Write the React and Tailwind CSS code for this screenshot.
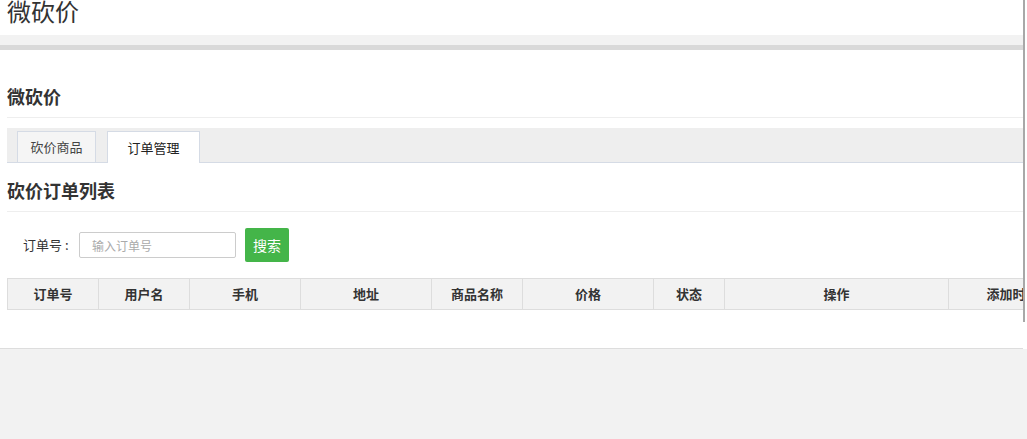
import React, { useState } from "react";

const columns = [
  { label: "订单号", width: "w-[91px]" },
  { label: "用户名", width: "w-[91px]" },
  { label: "手机", width: "w-[111px]" },
  { label: "地址", width: "w-[131px]" },
  { label: "商品名称", width: "w-[91px]" },
  { label: "价格", width: "w-[131px]" },
  { label: "状态", width: "w-[71px]" },
  { label: "操作", width: "w-[224px]" },
  { label: "添加时间", width: "w-[128px]" },
];

const tabs = ["砍价商品", "订单管理"];

const App = () => {
  const [activeTab, setActiveTab] = useState(1);
  const [orderNo, setOrderNo] = useState("");

  return (
    <div
      className="relative min-h-[439px] bg-[#f2f2f2] text-[#333]"
      style={{ fontFamily: '"Noto Sans CJK SC", "Noto Sans", sans-serif' }}
    >
      <div className="w-[1023px] overflow-hidden">
        {/* top header */}
        <div className="h-[35px] bg-white pl-[7px] overflow-hidden">
          <div className="-mt-[3px] text-[24px] leading-[28px] font-normal text-[#333]">微砍价</div>
        </div>
        <div className="h-[10px] bg-[#f2f2f2]" />
        <div className="h-[5px] bg-[#d9d9d9]" />

        {/* content panel */}
        <div className="h-[299px] bg-white pl-[7px] border-b border-[#dddddd]">
          <div className="pt-[34px] pb-[9px] border-b border-[#eeeeee]">
            <h2 className="text-[18px] leading-[24px] font-bold">微砍价</h2>
          </div>

          <div className="mt-[10px] h-[35px] bg-[#eeeeee] border-b border-[#d5dbe5] flex items-end gap-[11px] pl-[10px]">
            {tabs.map((tab, i) => (
              <button
                key={tab}
                onClick={() => setActiveTab(i)}
                className={
                  i === activeTab
                    ? "h-[32px] w-[93px] -mb-px bg-white border border-b-0 border-[#d5dbe5] text-[13px] text-[#222]"
                    : "h-[31px] w-[79px] bg-[#f5f5f5] border border-b-0 border-[#d5dbe5] text-[13px] text-[#444]"
                }
              >
                {tab}
              </button>
            ))}
          </div>

          <div className="mt-[15px] pb-[9px] border-b border-[#eeeeee]">
            <h3 className="text-[18px] leading-[24px] font-bold">砍价订单列表</h3>
          </div>

          <div className="mt-[16px] flex items-center h-[34px] pl-[16px]">
            <label className="text-[13px] w-[56px] flex">
              订单号<span className="ml-[3px]">:</span>
            </label>
            <input
              type="text"
              value={orderNo}
              onChange={(e) => setOrderNo(e.target.value)}
              placeholder="输入订单号"
              className="w-[157px] h-[26px] border border-[#cccccc] rounded-[2px] px-[12px] text-[12px] placeholder:text-[#aaaaaa] outline-none"
            />
            <button className="ml-[9px] w-[44px] h-[34px] bg-[#44b549] rounded-[2px] text-white text-[14px]">
              搜索
            </button>
          </div>

          <div className="mt-[16px] flex w-max border-t border-b border-l border-[#dddddd] bg-[#f2f2f2] h-[32px]">
            {columns.map((col) => (
              <div
                key={col.label}
                className={`${col.width} shrink-0 border-r border-[#dddddd] flex items-center justify-center text-[13px] font-bold`}
              >
                {col.label}
              </div>
            ))}
          </div>
        </div>
      </div>

      {/* scrollbar strip */}
      <div className="absolute top-0 right-0 w-[4px] h-[349px] bg-white">
        <div className="w-[2px] h-[322px] bg-[#a8a8a8]" />
      </div>
    </div>
  );
};

export default App;
